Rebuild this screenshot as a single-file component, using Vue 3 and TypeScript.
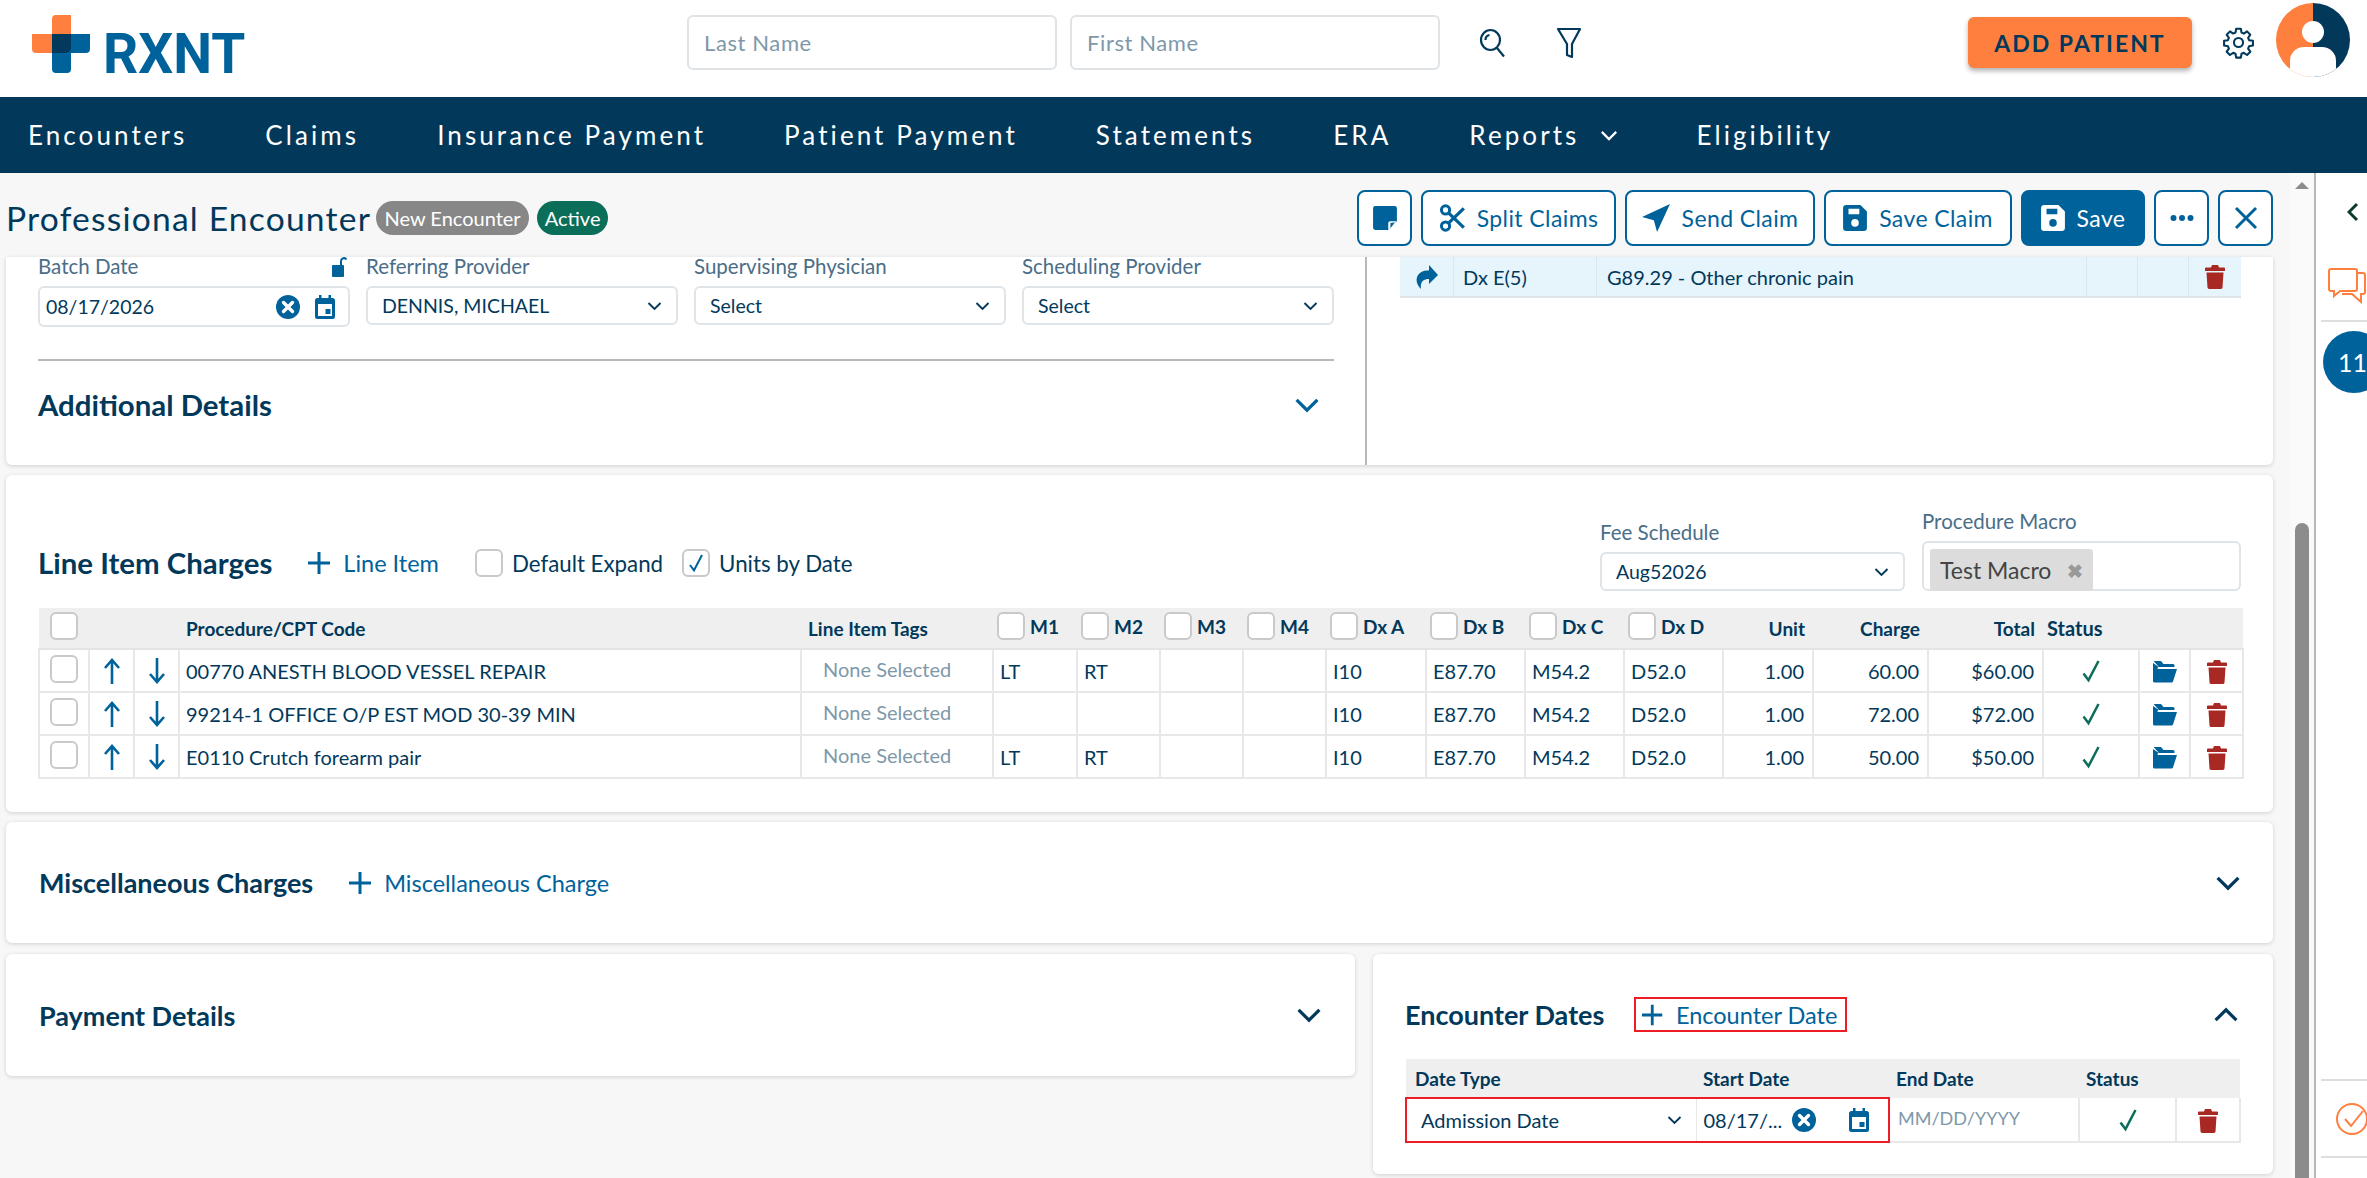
<template>
  <div class="app">
    <svg class="defs" width="0" height="0" aria-hidden="true">
      <symbol id="i-trash" viewBox="0 0 20 24"><path d="M7 0h6l1 2.500h5a1 1 0 0 1 1 1V6H0V3.500a1 1 0 0 1 1-1h5zM1.500 7.500h17l-1 15a1.600 1.600 0 0 1-1.600 1.500H4.100a1.600 1.600 0 0 1-1.600-1.500z" fill="currentColor"/></symbol>
      <symbol id="i-folder" viewBox="0 0 24 22"><path d="M1 0h7l2.500 3H20a1.500 1.500 0 0 1 1.500 1.500V6H6L1 .5z M0 2v17l4.500-12a1.500 1.500 0 0 1 1.400-1" fill="currentColor"/><path d="M5 8h19l-4 12.500a1.500 1.500 0 0 1-1.400 1H1.500a1.500 1.500 0 0 1-1.500-1.500V3z" fill="currentColor"/></symbol>
      <symbol id="i-clear" viewBox="0 0 24 24"><circle cx="12" cy="12" r="12" fill="currentColor"/><path d="M7.500 7.500l9 9m0-9l-9 9" stroke="#fff" stroke-width="3.400" stroke-linecap="round"/></symbol>
      <symbol id="i-cal" viewBox="0 0 20 24"><path d="M4 0h2.500v3h7V0H16v3h1.500A2.500 2.500 0 0 1 20 5.500v16a2.500 2.500 0 0 1-2.500 2.500h-15A2.500 2.500 0 0 1 0 21.500v-16A2.500 2.500 0 0 1 2.500 3H4zM3 9v12h14V9z" fill="currentColor"/><rect x="10.500" y="14" width="5" height="5" fill="currentColor"/></symbol>
      <symbol id="i-check" viewBox="0 0 24 28"><path d="M3 17l6 8L21 2" fill="none" stroke="currentColor" stroke-width="3"/></symbol>
      <symbol id="i-save" viewBox="0 0 22 24"><path fill-rule="evenodd" d="M3 0h13l6 6v15a3 3 0 0 1-3 3H3a3 3 0 0 1-3-3V3a3 3 0 0 1 3-3zM5 3.500v5h10v-5zM11 13a3.500 3.500 0 1 0 0 7 3.500 3.500 0 0 0 0-7z" fill="currentColor"/></symbol>
      <symbol id="i-chev" viewBox="0 0 20 12"><path d="M2 2l8 8 8-8" fill="none" stroke="currentColor" stroke-width="2.500"/></symbol>
      <symbol id="i-plus" viewBox="0 0 22 22"><path d="M11 0v22M0 11h22" fill="none" stroke="currentColor" stroke-width="3"/></symbol>
    </svg>

    <header class="topbar">
      <div class="logo">
        <svg class="logo-mark" viewBox="0 0 58 58" width="58" height="58">
          <path d="M20 4a4 4 0 0 1 4-4h15v38H4a4 4 0 0 1-4-4V19h20z" fill="#ff7f3f" opacity="1" />
          <path d="M20 19h38v15a4 4 0 0 1-4 4H39v16a4 4 0 0 1-4 4H24a4 4 0 0 1-4-4z" fill="#00629b" />
          <path d="M20 19h19v14a5 5 0 0 1-5 5H20z" fill="#03395c" />
        </svg>
        <span class="logo-text">RXNT</span>
      </div>
      <div class="search">
        <div class="search-input first">Last Name</div>
        <div class="search-input">First Name</div>
        <svg class="search-icon" viewBox="0 0 28 30" width="28" height="30"><ellipse cx="11.500" cy="12" rx="9.500" ry="10" fill="none" stroke="#02395b" stroke-width="2.200"/><path d="M18 20l7 8.500M6.500 12a5 5 0 0 1 4-5" fill="none" stroke="#02395b" stroke-width="2.200"/></svg>
        <svg class="filter-icon" viewBox="0 0 26 32" width="26" height="32"><path d="M2 2h22l-8 15v13l-5-2V17z" fill="none" stroke="#02395b" stroke-width="2.200" stroke-linejoin="round"/></svg>
      </div>
      <div class="top-right">
        <button class="add-patient">ADD PATIENT</button>
        <svg class="gear" viewBox="0 0 24 24" width="33" height="33"><path d="M10.300 2h3.400l.5 2.800 1.700.7 2.300-1.600 2.400 2.400-1.600 2.300.7 1.700 2.800.5v3.400l-2.800.5-.7 1.700 1.600 2.300-2.400 2.400-2.300-1.600-1.700.7-.5 2.800h-3.400l-.5-2.800-1.700-.7-2.300 1.600-2.400-2.400 1.600-2.300-.7-1.700-2.800-.5v-3.400l2.800-.5.7-1.700-1.600-2.300 2.400-2.400 2.300 1.600 1.700-.7z" fill="none" stroke="#02395b" stroke-width="1.500" stroke-linejoin="round"/><circle cx="12" cy="12" r="3.300" fill="none" stroke="#02395b" stroke-width="1.500"/></svg>
        <svg class="avatar" viewBox="0 0 74 74" width="74" height="74">
          <defs><clipPath id="av"><circle cx="37" cy="37" r="37"/></clipPath></defs>
          <g clip-path="url(#av)">
            <rect x="0" y="0" width="37" height="74" fill="#ff7f3f"/>
            <rect x="37" y="0" width="37" height="74" fill="#02395b"/>
            <circle cx="37" cy="29" r="11" fill="#fff"/>
            <path d="M14 74V58a14 14 0 0 1 14-14h18a14 14 0 0 1 14 14v16z" fill="#fff"/>
          </g>
        </svg>
      </div>
    </header>

    <nav class="navbar">
      <span v-for="item in navItems" :key="item" class="nav-item">
        {{ item }}
        <svg v-if="item === 'Reports'" class="nav-chev"><use href="#i-chev"/></svg>
      </span>
    </nav>

    <div class="body-row">
      <div class="main">
        <div class="titlebar">
          <div class="title-left">
            <h1>Professional Encounter</h1>
            <span class="badge grey">New Encounter</span>
            <span class="badge green">Active</span>
          </div>
          <div class="actions">
            <button class="act square">
              <svg viewBox="0 0 24 24" width="26" height="26"><path d="M3 1h18a2 2 0 0 1 2 2v12l-8 8H3a2 2 0 0 1-2-2V3a2 2 0 0 1 2-2z" fill="#00629b"/><path d="M23 15h-6a2 2 0 0 0-2 2v6z" fill="#fff"/><path d="M21 16l-4 .5v5" fill="#00629b"/></svg>
            </button>
            <button class="act">
              <svg viewBox="0 0 24 26" width="26" height="28"><circle cx="6" cy="5.500" r="3.800" fill="none" stroke="#00629b" stroke-width="2.800"/><circle cx="6" cy="20.500" r="3.800" fill="none" stroke="#00629b" stroke-width="2.800"/><path d="M8.500 8L23 22M8.500 18L23 4" stroke="#00629b" stroke-width="3"/></svg>
              Split Claims
            </button>
            <button class="act">
              <svg viewBox="0 0 26 26" width="28" height="28"><path d="M26 0L0 12l11 3 3 11z" fill="#00629b"/></svg>
              Send Claim
            </button>
            <button class="act">
              <svg width="24" height="26" class="ic-blue"><use href="#i-save"/></svg>
              Save Claim
            </button>
            <button class="act primary">
              <svg width="24" height="26"><use href="#i-save"/></svg>
              Save
            </button>
            <button class="act square">
              <svg viewBox="0 0 24 6" width="24" height="6"><circle cx="3.500" cy="3" r="3" fill="#00629b"/><circle cx="12" cy="3" r="3" fill="#00629b"/><circle cx="20.500" cy="3" r="3" fill="#00629b"/></svg>
            </button>
            <button class="act square">
              <svg viewBox="0 0 24 24" width="24" height="24"><path d="M2 2l20 20M22 2L2 22" stroke="#00629b" stroke-width="3"/></svg>
            </button>
          </div>
        </div>

        <div class="content">
          <section class="card top-card">
            <div class="top-left">
              <div class="field-row">
                <div class="field">
                  <div class="label">Batch Date
                    <svg class="lock" viewBox="0 0 16 20" width="16" height="20"><path d="M1 8h10a1 1 0 0 1 1 1v10a1 1 0 0 1-1 1H1a1 1 0 0 1-1-1V9a1 1 0 0 1 1-1z" fill="#00629b"/><path d="M9 8V4a3 3 0 0 1 5.500-1.500" fill="none" stroke="#00629b" stroke-width="2"/></svg>
                  </div>
                  <div class="date-input">
                    <span class="grow">08/17/2026</span>
                    <svg width="24" height="24" class="ic-blue"><use href="#i-clear"/></svg>
                    <svg width="20" height="24" class="ic-blue cal-gap"><use href="#i-cal"/></svg>
                  </div>
                </div>
                <div v-for="f in topFields" :key="f.label" class="field">
                  <div class="label">{{ f.label }}</div>
                  <div class="select"><span>{{ f.value }}</span><svg class="sel-chev"><use href="#i-chev"/></svg></div>
                </div>
              </div>
              <div class="details-row">
                <h2 class="large">Additional Details</h2>
                <svg class="big-chev"><use href="#i-chev"/></svg>
              </div>
            </div>
            <div class="top-right-panel">
              <div class="dx-row">
                <span class="dx-c1"><svg viewBox="0 0 22 24" width="22" height="24"><path d="M13 0l9 10-9 9v-5C7 14 4 17 5 24 1 20-1 15 2 10c2-3 6-5 11-4.500z" fill="#00629b"/></svg></span>
                <span class="dx-c2">Dx E(5)</span>
                <span class="dx-c3">G89.29 - Other chronic pain</span>
                <span class="dx-c4"></span>
                <span class="dx-c4"></span>
                <span class="dx-c5"><svg width="20" height="24" class="ic-red"><use href="#i-trash"/></svg></span>
              </div>
            </div>
          </section>

          <section class="card line-card">
            <div class="line-head">
              <h2 class="large">Line Item Charges</h2>
              <a class="add-link"><svg width="22" height="22"><use href="#i-plus"/></svg>Line Item</a>
              <label class="check-label"><span class="cb"></span>Default Expand</label>
              <label class="check-label"><span class="cb"><svg viewBox="0 0 24 28" width="16" height="20" class="ic-blue"><use href="#i-check"/></svg></span>Units by Date</label>
              <div class="grow"></div>
              <div class="field fee">
                <div class="label">Fee Schedule</div>
                <div class="select"><span>Aug52026</span><svg class="sel-chev"><use href="#i-chev"/></svg></div>
              </div>
              <div class="field macro">
                <div class="label">Procedure Macro</div>
                <div class="macro-box"><span class="chip">Test Macro <b>✖</b></span></div>
              </div>
            </div>

            <table class="grid line-table">
              <colgroup>
                <col v-for="(w, i) in lineCols" :key="i" :style="{ width: w + 'px' }" />
              </colgroup>
              <thead>
                <tr>
                  <th class="center"><span class="cb"></span></th>
                  <th colspan="2"></th>
                  <th class="pl">Procedure/CPT Code</th>
                  <th class="pl">Line Item Tags</th>
                  <th v-for="h in checkHeads" :key="h"><span class="th-check"><span class="cb"></span>{{ h }}</span></th>
                  <th class="right">Unit</th>
                  <th class="right">Charge</th>
                  <th class="right">Total</th>
                  <th class="status">Status</th>
                  <th colspan="2"></th>
                </tr>
              </thead>
              <tbody>
                <tr v-for="row in lineRows" :key="row.code">
                  <td class="center"><span class="cb"></span></td>
                  <td class="center"><svg class="arrow" viewBox="0 0 18 26"><path d="M9 26V2M2 10l7-8 7 8" fill="none" stroke="currentColor" stroke-width="2.600"/></svg></td>
                  <td class="center"><svg class="arrow" viewBox="0 0 18 26"><path d="M9 0v24M2 16l7 8 7-8" fill="none" stroke="currentColor" stroke-width="2.600"/></svg></td>
                  <td class="code">{{ row.code }}</td>
                  <td class="none">None Selected</td>
                  <td>{{ row.m1 }}</td>
                  <td>{{ row.m2 }}</td>
                  <td></td>
                  <td></td>
                  <td>I10</td>
                  <td>E87.70</td>
                  <td>M54.2</td>
                  <td>D52.0</td>
                  <td class="right">1.00</td>
                  <td class="right">{{ row.charge }}</td>
                  <td class="right">${{ row.charge }}</td>
                  <td class="center"><svg width="20" height="26" class="ic-green"><use href="#i-check"/></svg></td>
                  <td class="center"><svg width="24" height="22" class="ic-blue"><use href="#i-folder"/></svg></td>
                  <td class="center"><svg width="20" height="24" class="ic-red"><use href="#i-trash"/></svg></td>
                </tr>
              </tbody>
            </table>
          </section>

          <section class="card misc-card">
            <h2>Miscellaneous Charges</h2>
            <a class="add-link"><svg width="22" height="22"><use href="#i-plus"/></svg>Miscellaneous Charge</a>
            <div class="grow"></div>
            <svg class="big-chev"><use href="#i-chev"/></svg>
          </section>

          <div class="bottom-row">
            <section class="card pay-card">
              <h2>Payment Details</h2>
              <svg class="big-chev"><use href="#i-chev"/></svg>
            </section>
            <section class="card dates-card">
              <div class="dates-head">
                <h2>Encounter Dates</h2>
                <a class="add-link outlined"><svg width="22" height="22"><use href="#i-plus"/></svg>Encounter Date</a>
                <div class="grow"></div>
                <svg class="big-chev flip"><use href="#i-chev"/></svg>
              </div>
              <table class="grid dates-table">
                <colgroup>
                  <col v-for="(w, i) in dateCols" :key="i" :style="{ width: w + 'px' }" />
                </colgroup>
                <thead>
                  <tr><th class="pl">Date Type</th><th class="pl">Start Date</th><th class="pl">End Date</th><th class="pl">Status</th><th></th></tr>
                </thead>
                <tbody>
                  <tr>
                    <td class="err-left"><div class="date-type"><span>Admission Date</span><svg class="sel-chev"><use href="#i-chev"/></svg></div></td>
                    <td class="err-right"><div class="date-cell"><span class="grow">08/17/...</span><svg width="24" height="24" class="ic-blue"><use href="#i-clear"/></svg><svg width="20" height="24" class="ic-blue cal-gap2"><use href="#i-cal"/></svg></div></td>
                    <td class="none left">MM/DD/YYYY</td>
                    <td class="center"><svg width="20" height="26" class="ic-green"><use href="#i-check"/></svg></td>
                    <td class="center"><svg width="20" height="24" class="ic-red"><use href="#i-trash"/></svg></td>
                  </tr>
                </tbody>
              </table>
            </section>
          </div>
        </div>
      </div>

      <div class="scrollbar">
        <span class="scroll-up"></span>
        <span class="scroll-thumb"></span>
      </div>

      <aside class="sidebar">
        <svg class="side-chev" viewBox="0 0 12 20" width="12" height="20"><path d="M10 2l-8 8 8 8" fill="none" stroke="#0c3b2e" stroke-width="3"/></svg>
        <svg class="side-chat" viewBox="0 0 38 36" width="38" height="36"><path d="M3 1h24a2 2 0 0 1 2 2v18a2 2 0 0 1-2 2H12l-6 5v-5H3a2 2 0 0 1-2-2V3a2 2 0 0 1 2-2z M30 5h5a2 2 0 0 1 2 2v17a2 2 0 0 1-2 2h-2v8l-9-8h-10" fill="none" stroke="#ff7f3f" stroke-width="2"/></svg>
        <div class="side-rule"></div>
        <div class="side-count">11</div>
        <div class="grow"></div>
        <div class="side-rule"></div>
        <svg class="side-check" viewBox="0 0 38 38" width="38" height="38"><circle cx="17" cy="19" r="15" fill="none" stroke="#ff7f3f" stroke-width="2"/><path d="M10 19l6 7 12-15" fill="none" stroke="#ff7f3f" stroke-width="2"/></svg>
        <div class="side-rule last"></div>
      </aside>
    </div>
  </div>
</template>

<script setup lang="ts">
interface LineRow {
  code: string
  m1: string
  m2: string
  charge: string
}

const navItems = ['Encounters', 'Claims', 'Insurance Payment', 'Patient Payment', 'Statements', 'ERA', 'Reports', 'Eligibility']

const topFields = [
  { label: 'Referring Provider', value: 'DENNIS, MICHAEL' },
  { label: 'Supervising Physician', value: 'Select' },
  { label: 'Scheduling Provider', value: 'Select' }
]

const checkHeads = ['M1', 'M2', 'M3', 'M4', 'Dx A', 'Dx B', 'Dx C', 'Dx D']

const lineCols = [50, 45, 45, 622, 192, 84, 83, 83, 83, 100, 99, 99, 99, 90, 115, 115, 96, 51, 53]
const dateCols = [290, 193, 190, 97, 64]

const lineRows: LineRow[] = [
  { code: '00770 ANESTH BLOOD VESSEL REPAIR', m1: 'LT', m2: 'RT', charge: '60.00' },
  { code: '99214-1 OFFICE O/P EST MOD 30-39 MIN', m1: '', m2: '', charge: '72.00' },
  { code: 'E0110 Crutch forearm pair', m1: 'LT', m2: 'RT', charge: '50.00' }
]
</script>

<style>
html, body {
  margin: 0;
  overflow: hidden;
  background: #fff;
}
</style>

<style scoped>
.app {
  width: 2367px;
  height: 1178px;
  display: flex;
  flex-direction: column;
  overflow: hidden;
  font-family: Lato, 'Noto Sans', sans-serif;
  color: #02395b;
  font-size: 20px;
}

.defs {
  position: absolute;
}

.grow {
  flex: 1;
}

.ic-blue {
  color: #00629b;
}

.ic-red {
  color: #a82824;
}

.ic-green {
  color: #0a6e58;
}

/* Top bar */
.topbar {
  height: 97px;
  flex: none;
  display: flex;
  align-items: center;
  box-sizing: border-box;
  padding-bottom: 12px;
  background: #fff;
}

.logo {
  display: flex;
  align-items: flex-end;
  margin: 2px 0 0 32px;
  width: 655px;
  height: 58px;
}

.logo-mark {
  flex: none;
}

.logo-text {
  font-family: Roboto, sans-serif;
  font-weight: 700;
  font-size: 55px;
  line-height: 38px;
  color: #00629b;
  margin-left: 13px;
  height: 38px;
}

.search {
  display: flex;
  align-items: center;
}

.search-input {
  width: 370px;
  height: 55px;
  box-sizing: border-box;
  border: 2px solid #dfe3e6;
  border-radius: 6px;
  padding-left: 15px;
  line-height: 51px;
  font-size: 22px;
  color: #7e98a9;
  letter-spacing: 0.6px;
  margin-right: 13px;
}

.search-icon {
  margin-left: 26px;
}

.filter-icon {
  margin-left: 49px;
}

.top-right {
  display: flex;
  align-items: center;
  margin-left: auto;
}

.add-patient {
  width: 224px;
  height: 51px;
  border: none;
  border-radius: 6px;
  background: #ff7f3f;
  color: #02395b;
  font: 700 23px Lato, sans-serif;
  letter-spacing: 2px;
  box-shadow: 0 3px 5px rgba(0, 0, 0, 0.3);
}

.gear {
  margin-left: 30px;
}

.avatar {
  margin-left: 21px;
  margin-right: 17px;
  margin-bottom: 5px;
}

/* Nav */
.navbar {
  height: 76px;
  flex: none;
  display: flex;
  align-items: center;
  gap: 78px;
  padding-left: 28px;
  background: #02395b;
}

.nav-item {
  color: #fff;
  font-size: 26px;
  letter-spacing: 3.080px;
  display: flex;
  align-items: center;
  white-space: nowrap;
}

.nav-chev {
  width: 18px;
  height: 11px;
  margin-left: 21px;
}

/* Body */
.body-row {
  flex: 1;
  display: flex;
  min-height: 0;
}

.main {
  flex: none;
  width: 2290px;
  display: flex;
  flex-direction: column;
  background: #f7f7f7;
  overflow: hidden;
}

.titlebar {
  height: 84px;
  flex: none;
  display: flex;
  align-items: center;
  justify-content: space-between;
  padding: 5px 17px 0 6px;
  box-sizing: border-box;
}

.title-left {
  display: flex;
  align-items: center;
}

h1 {
  margin: 0 5px 0 0;
  font-size: 33.600px;
  font-weight: 400;
  letter-spacing: 1.200px;
  color: #02395b;
  white-space: nowrap;
}

.badge {
  height: 34px;
  line-height: 34px;
  border-radius: 17px;
  box-sizing: border-box;
  color: #fff;
  font-size: 20px;
  margin-right: 8px;
  text-align: center;
  white-space: nowrap;
}

.badge.grey {
  background: #878787;
  width: 153px;
}

.badge.green {
  background: #0a6e58;
  width: 71px;
}

.actions {
  display: flex;
  gap: 9px;
}

.act {
  height: 56px;
  box-sizing: border-box;
  border: 2px solid #00629b;
  border-radius: 8px;
  background: #fff;
  color: #00629b;
  font: 400 23px Lato, sans-serif;
  display: flex;
  align-items: center;
  justify-content: center;
  gap: 12px;
  padding: 0;
  letter-spacing: 0.4px;
  white-space: nowrap;
}

.act:nth-child(2) { width: 195px; }
.act:nth-child(3) { width: 190px; }
.act:nth-child(4) { width: 188px; }
.act:nth-child(5) { width: 124px; }

.act.square {
  width: 55px;
}

.act.primary {
  background: #00629b;
  color: #fff;
}

/* Cards */
.content {
  flex: 1;
  padding: 0 17px 0 6px;
  display: flex;
  flex-direction: column;
  gap: 10px;
  min-height: 0;
}

.card {
  background: #fff;
  border-radius: 6px;
  box-shadow: 0 1px 4px rgba(0, 0, 0, 0.16);
}

h2 {
  margin: 0;
  font-size: 27px;
  font-weight: 700;
  color: #02395b;
  white-space: nowrap;
}

h2.large {
  font-size: 29.400px;
}

.top-card {
  height: 208px;
  flex: none;
  display: flex;
  border-radius: 0 0 6px 6px;
}

.top-left {
  width: 1361px;
  flex: none;
  box-sizing: border-box;
  padding: 0 31px 0 32px;
  border-right: 2px solid #b8b8b8;
}

.field-row {
  display: flex;
  gap: 16px;
  height: 104px;
  border-bottom: 2px solid #b8b8b8;
  box-sizing: border-box;
}

.field {
  width: 312px;
  flex: none;
}

.label {
  height: 29px;
  line-height: 18px;
  font-size: 20.500px;
  color: #4a6e87;
  display: flex;
  justify-content: space-between;
  white-space: nowrap;
}

.lock {
  margin-right: 2px;
}

.date-input,
.select {
  height: 39px;
  box-sizing: border-box;
  border: 2px solid #dfe4e8;
  border-radius: 6px;
  display: flex;
  align-items: center;
  color: #02395b;
  font-size: 19.500px;
  padding: 0 14px;
  background: #fff;
}

.date-input {
  height: 41px;
  padding: 0 13px 0 6px;
}

.select {
  justify-content: space-between;
}

.cal-gap {
  margin-left: 15px;
}

.sel-chev {
  width: 15px;
  height: 10px;
  color: #02395b;
  flex: none;
}

.details-row {
  height: 87px;
  display: flex;
  align-items: center;
  justify-content: space-between;
  padding-right: 14px;
}

.big-chev {
  width: 26px;
  height: 16px;
  color: #00629b;
  flex: none;
}

.big-chev.flip {
  transform: rotate(180deg);
  color: #02395b;
  margin-right: 2px;
}

.top-right-panel {
  flex: 1;
  padding: 0 32px 0 33px;
}

.dx-row {
  height: 41px;
  display: flex;
  align-items: center;
  background: #e6f4fc;
  border-bottom: 2px solid #dfe4e8;
  box-sizing: border-box;
}

.dx-row > span {
  height: 100%;
  display: flex;
  align-items: center;
  box-sizing: border-box;
  border-right: 1px solid #dce6ec;
}

.dx-c1 { width: 54px; justify-content: center; }
.dx-c2 { width: 143px; padding-left: 9px; }
.dx-c3 { width: 490px; padding-left: 10px; }
.dx-c4 { width: 51px; }
.dx-c5 { flex: 1; justify-content: center; border-right: none !important; }

/* Line items */
.line-card {
  height: 337px;
  flex: none;
  box-sizing: border-box;
  padding: 0 32px 0 32px;
}

.line-head {
  height: 133px;
  display: flex;
  align-items: flex-end;
  padding-bottom: 17px;
  box-sizing: border-box;
}

.line-head > .add-link,
.line-head > .check-label {
  margin-bottom: 14px;
}

.line-head > h2 {
  margin-bottom: 11px;
}

.add-link {
  display: inline-flex;
  align-items: center;
  gap: 13px;
  color: #00629b;
  font-size: 23.500px;
  margin-left: 36px;
  white-space: nowrap;
}

.check-label {
  display: inline-flex;
  align-items: center;
  gap: 9px;
  font-size: 22.300px;
  margin-left: 19px;
  white-space: nowrap;
}

.line-head .check-label:nth-of-type(1) {
  margin-left: 36px;
}

.cb {
  width: 28px;
  height: 28px;
  box-sizing: border-box;
  border: 2px solid #c9c9c9;
  border-radius: 6px;
  background: #fff;
  display: inline-flex;
  align-items: center;
  justify-content: center;
  flex: none;
}

.fee {
  width: 305px;
  margin-right: 17px;
}

.macro {
  width: 319px;
}

.macro-box {
  height: 50px;
  box-sizing: border-box;
  border: 2px solid #dfe4e8;
  border-radius: 6px;
  padding: 6px 0 0 6px;
}

.chip {
  display: inline-flex;
  align-items: center;
  height: 42px;
  width: 163px;
  box-sizing: border-box;
  padding-left: 10px;
  background: #dcdcdc;
  border-radius: 3px;
  font-size: 23px;
  color: #444;
  white-space: pre;
}

.chip b {
  color: #999;
  font-size: 19px;
  margin-left: 10px;
}

.grid {
  border-collapse: collapse;
  table-layout: fixed;
  width: 100%;
}

.grid th {
  background: #efefef;
  font-size: 19px;
  font-weight: 700;
  text-align: left;
  padding: 0;
  height: 40px;
  border-bottom: 2px solid #e4e4e4;
  white-space: nowrap;
  overflow: hidden;
}

.grid th.status {
  padding-left: 4px;
  font-size: 20px;
}

.grid td {
  height: 43px;
  padding: 0 0 0 6px;
  border: 2px solid #e8e8e8;
  border-top: none;
  font-size: 20px;
  white-space: nowrap;
  overflow: hidden;
  box-sizing: border-box;
}

.grid td.center,
.grid th.center {
  padding: 0;
  text-align: center;
  vertical-align: middle;
}

.grid svg {
  vertical-align: middle;
}

.grid .right {
  text-align: right;
  padding-right: 8px;
}

.grid th.pl {
  padding-left: 7px;
}

.grid td.none {
  color: #7e98a9;
  padding-left: 21px;
  padding-bottom: 3px;
}

.grid td.none.left {
  padding-left: 8px;
  font-size: 18px;
}

.arrow {
  width: 18px;
  height: 26px;
  color: #00629b;
}

.th-check {
  display: inline-flex;
  align-items: center;
  gap: 5px;
  padding-left: 4px;
}

/* Bottom */
.misc-card {
  height: 121px;
  flex: none;
  display: flex;
  align-items: center;
  padding: 0 32px 0 33px;
}

.misc-card .big-chev,
.pay-card .big-chev {
  color: #02395b;
}

.bottom-row {
  display: flex;
  gap: 18px;
  align-items: flex-start;
  margin-top: 1px;
}

.pay-card {
  width: 1349px;
  height: 122px;
  flex: none;
  box-sizing: border-box;
  display: flex;
  align-items: center;
  justify-content: space-between;
  padding: 0 33px;
}

.dates-card {
  flex: 1;
  height: 220px;
  box-sizing: border-box;
  padding: 0 32px;
}

.dates-head {
  height: 105px;
  box-sizing: border-box;
  padding-top: 16px;
  display: flex;
  align-items: center;
}

.add-link.outlined {
  margin-left: 30px;
  height: 35px;
  padding: 0 8px 0 6px;
  border: 2px solid #ee1c25;
  box-sizing: border-box;
  width: 213px;
}

.dates-table th {
  height: 38px;
  border-bottom: none;
}

.dates-table th.pl:first-child {
  padding-left: 9px;
}

.dates-table td {
  height: 44px;
}

.grid td.err-left {
  border: 2px solid #ee1c25;
  border-right: 1px solid #e8e8e8;
  padding: 0;
}

.grid td.err-right {
  border: 2px solid #ee1c25;
  border-left: none;
  padding: 0;
}

.date-type {
  display: flex;
  align-items: center;
  justify-content: space-between;
  padding: 0 14px;
}

.date-cell {
  display: flex;
  align-items: center;
  padding: 0 19px 0 7px;
}

.cal-gap2 {
  margin-left: 33px;
}

/* Scrollbar and sidebar */
.scrollbar {
  width: 24px;
  flex: none;
  background: #fafafa;
  position: relative;
  display: flex;
  flex-direction: column;
  align-items: center;
}

.scroll-up {
  width: 0;
  height: 0;
  margin-top: 9px;
  border: 7px solid transparent;
  border-top: none;
  border-bottom-color: #8c8c8c;
}

.scroll-thumb {
  position: absolute;
  top: 350px;
  bottom: 0;
  left: 5px;
  width: 14px;
  background: #8c8c8c;
  border-radius: 7px 7px 0 0;
}

.sidebar {
  flex: 1;
  min-width: 0;
  border-left: 2px solid #b8b8b8;
  background: #fff;
  display: flex;
  flex-direction: column;
  overflow: hidden;
}

.side-chev {
  margin: 29px 0 0 31px;
  flex: none;
}

.side-chat {
  margin: 46px 0 0 12px;
  flex: none;
}

.side-rule {
  height: 2px;
  background: #dedede;
  margin-left: 5px;
  flex: none;
}

.side-chat + .side-rule {
  margin-top: 16px;
}

.side-count {
  width: 62px;
  height: 62px;
  flex: none;
  border-radius: 50%;
  margin: 9px 0 0 7px;
  background: #00629b;
  color: #fff;
  font-size: 25px;
  line-height: 62px;
  padding-left: 15px;
  box-sizing: border-box;
  white-space: nowrap;
}

.side-check {
  margin: 19px 0 18px 19px;
  flex: none;
}

.side-rule.last {
  margin-bottom: 20px;
}
</style>
